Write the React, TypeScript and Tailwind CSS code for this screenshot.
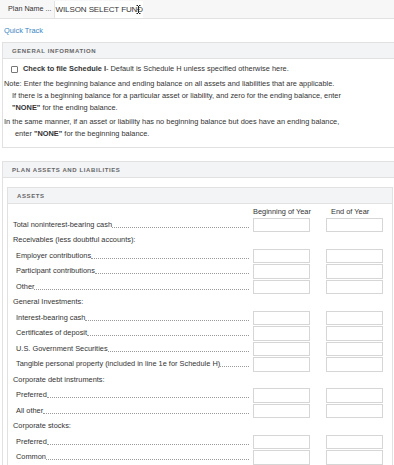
import React from "react";

type Row =
    | { kind: "group"; label: string }
    | { kind: "field"; label: string; sub?: boolean };

const rows: Row[] = [
    { kind: "field", label: "Total noninterest-bearing cash" },
    { kind: "group", label: "Receivables (less doubtful accounts):" },
    { kind: "field", label: "Employer contributions", sub: true },
    { kind: "field", label: "Participant contributions", sub: true },
    { kind: "field", label: "Other", sub: true },
    { kind: "group", label: "General Investments:" },
    { kind: "field", label: "Interest-bearing cash", sub: true },
    { kind: "field", label: "Certificates of deposit", sub: true },
    { kind: "field", label: "U.S. Government Securities", sub: true },
    {
        kind: "field",
        label: "Tangible personal property (included in line 1e for Schedule H)",
        sub: true,
    },
    { kind: "group", label: "Corporate debt instruments:" },
    { kind: "field", label: "Preferred", sub: true },
    { kind: "field", label: "All other", sub: true },
    { kind: "group", label: "Corporate stocks:" },
    { kind: "field", label: "Preferred", sub: true },
    { kind: "field", label: "Common", sub: true },
];

const PanelHeader = ({ title, pl }: { title: string; pl: string }) => (
    <div
        className={`h-[16px] bg-[#f3f4f6] border-b border-[#e1e1e1] flex items-center ${pl} text-[6px] font-bold tracking-[0.6px] text-[#666] uppercase`}
    >
        {title}
    </div>
);

const Box = () => (
    <div className="w-[57px] h-[14.5px] bg-white border border-[#d6d6d6] shrink-0" />
);

const AssetRow = ({ row }: { row: Row }) => {
    if (row.kind === "group") {
        return (
            <div className="h-[15.5px] flex items-center pl-[5px]">{row.label}</div>
        );
    }
    return (
        <div className="h-[15.5px] flex items-center">
            <div
                className={`flex-1 flex items-center ${row.sub ? "pl-[8px]" : "pl-[5px]"} pr-[4px]`}
            >
                <span className="whitespace-nowrap">{row.label}</span>
                <span className="flex-1 mt-[5px] border-b border-dotted border-[#9a9a9a]" />
            </div>
            <Box />
            <div className="w-[16px]" />
            <Box />
            <div className="w-[9px]" />
        </div>
    );
};

export default function App() {
    return (
        <div className="w-[394px] h-[465px] overflow-hidden bg-white text-[#333] text-[7.4px] leading-[12px] font-['Liberation_Sans',Arial,sans-serif]">
            {/* plan name bar */}
            <div className="h-[19px] bg-[#f7f7f7] border-b border-[#e2e2e2] flex items-center pl-[8px]">
                <span className="text-[7.2px] whitespace-nowrap">Plan Name ...</span>
                <div className="relative ml-[2px] mt-[1px] w-[89px] h-[17px] bg-white border-l border-[#e4e4e4] flex items-center pl-[1px] overflow-hidden">
                    <span className="text-[8px] tracking-[-0.1px] whitespace-nowrap text-[#333]">
                        WILSON SELECT FUND
                    </span>
                    <svg
                        className="absolute left-[81px] top-[4px]"
                        width="5"
                        height="9"
                        viewBox="0 0 5 9"
                    >
                        <path
                            d="M0.5 0.5h1.5M3 0.5h1.5M2.5 1v7M0.5 8.5h1.5M3 8.5h1.5M1.5 4.5h2"
                            stroke="#222"
                            strokeWidth="1"
                            fill="none"
                        />
                    </svg>
                </div>
            </div>

            <div className="h-[23px] flex items-center pl-[4px]">
                <span className="text-[#3a86c4]">Quick Track</span>
            </div>

            {/* general information */}
            <div className="ml-[2px] w-[400px] border border-[#e1e1e1]">
                <PanelHeader title="General Information" pl="pl-[9px]" />
                <div className="pt-[4px] pb-[7px] pl-[1px]">
                    <div className="flex items-center h-[12px] pl-[7px]">
                        <span className="w-[7px] h-[7px] border border-[#777] bg-white rounded-[1px] shrink-0" />
                        <span className="ml-[5px] font-bold">Check to file Schedule I</span>
                        <span>- Default is Schedule H unless specified otherwise here.</span>
                    </div>
                    <div className="mt-[3px]">
                        Note: Enter the beginning balance and ending balance on all assets and
                        liabilities that are applicable.
                    </div>
                    <div className="pl-[8px]">
                        If there is a beginning balance for a particular asset or liability, and
                        zero for the ending balance, enter
                    </div>
                    <div className="pl-[8px]">
                        <span className="font-bold">"NONE"</span> for the ending balance.
                    </div>
                    <div className="mt-[2px]">
                        In the same manner, if an asset or liability has no beginning balance but
                        does have an ending balance,
                    </div>
                    <div className="pl-[11px]">
                        enter <span className="font-bold">"NONE"</span> for the beginning balance.
                    </div>
                </div>
            </div>

            {/* plan assets and liabilities */}
            <div className="ml-[2px] mt-[13px] w-[400px] border border-[#e1e1e1]">
                <PanelHeader title="Plan Assets and Liabilities" pl="pl-[9px]" />
                <div className="pt-[9px] pl-[4px]">
                    <div className="w-[386px] border border-[#e1e1e1]">
                        <PanelHeader title="Assets" pl="pl-[9px]" />
                        <div className="h-[13px] flex items-end">
                            <div className="flex-1" />
                            <div className="w-[57px] text-center whitespace-nowrap leading-[11px]">
                                Beginning of Year
                            </div>
                            <div className="w-[16px]" />
                            <div className="w-[57px] pl-[5px] whitespace-nowrap leading-[11px]">
                                End of Year
                            </div>
                            <div className="w-[9px]" />
                        </div>
                        {rows.map((r, i) => (
                            <AssetRow key={i} row={r} />
                        ))}
                    </div>
                </div>
            </div>
        </div>
    );
}
